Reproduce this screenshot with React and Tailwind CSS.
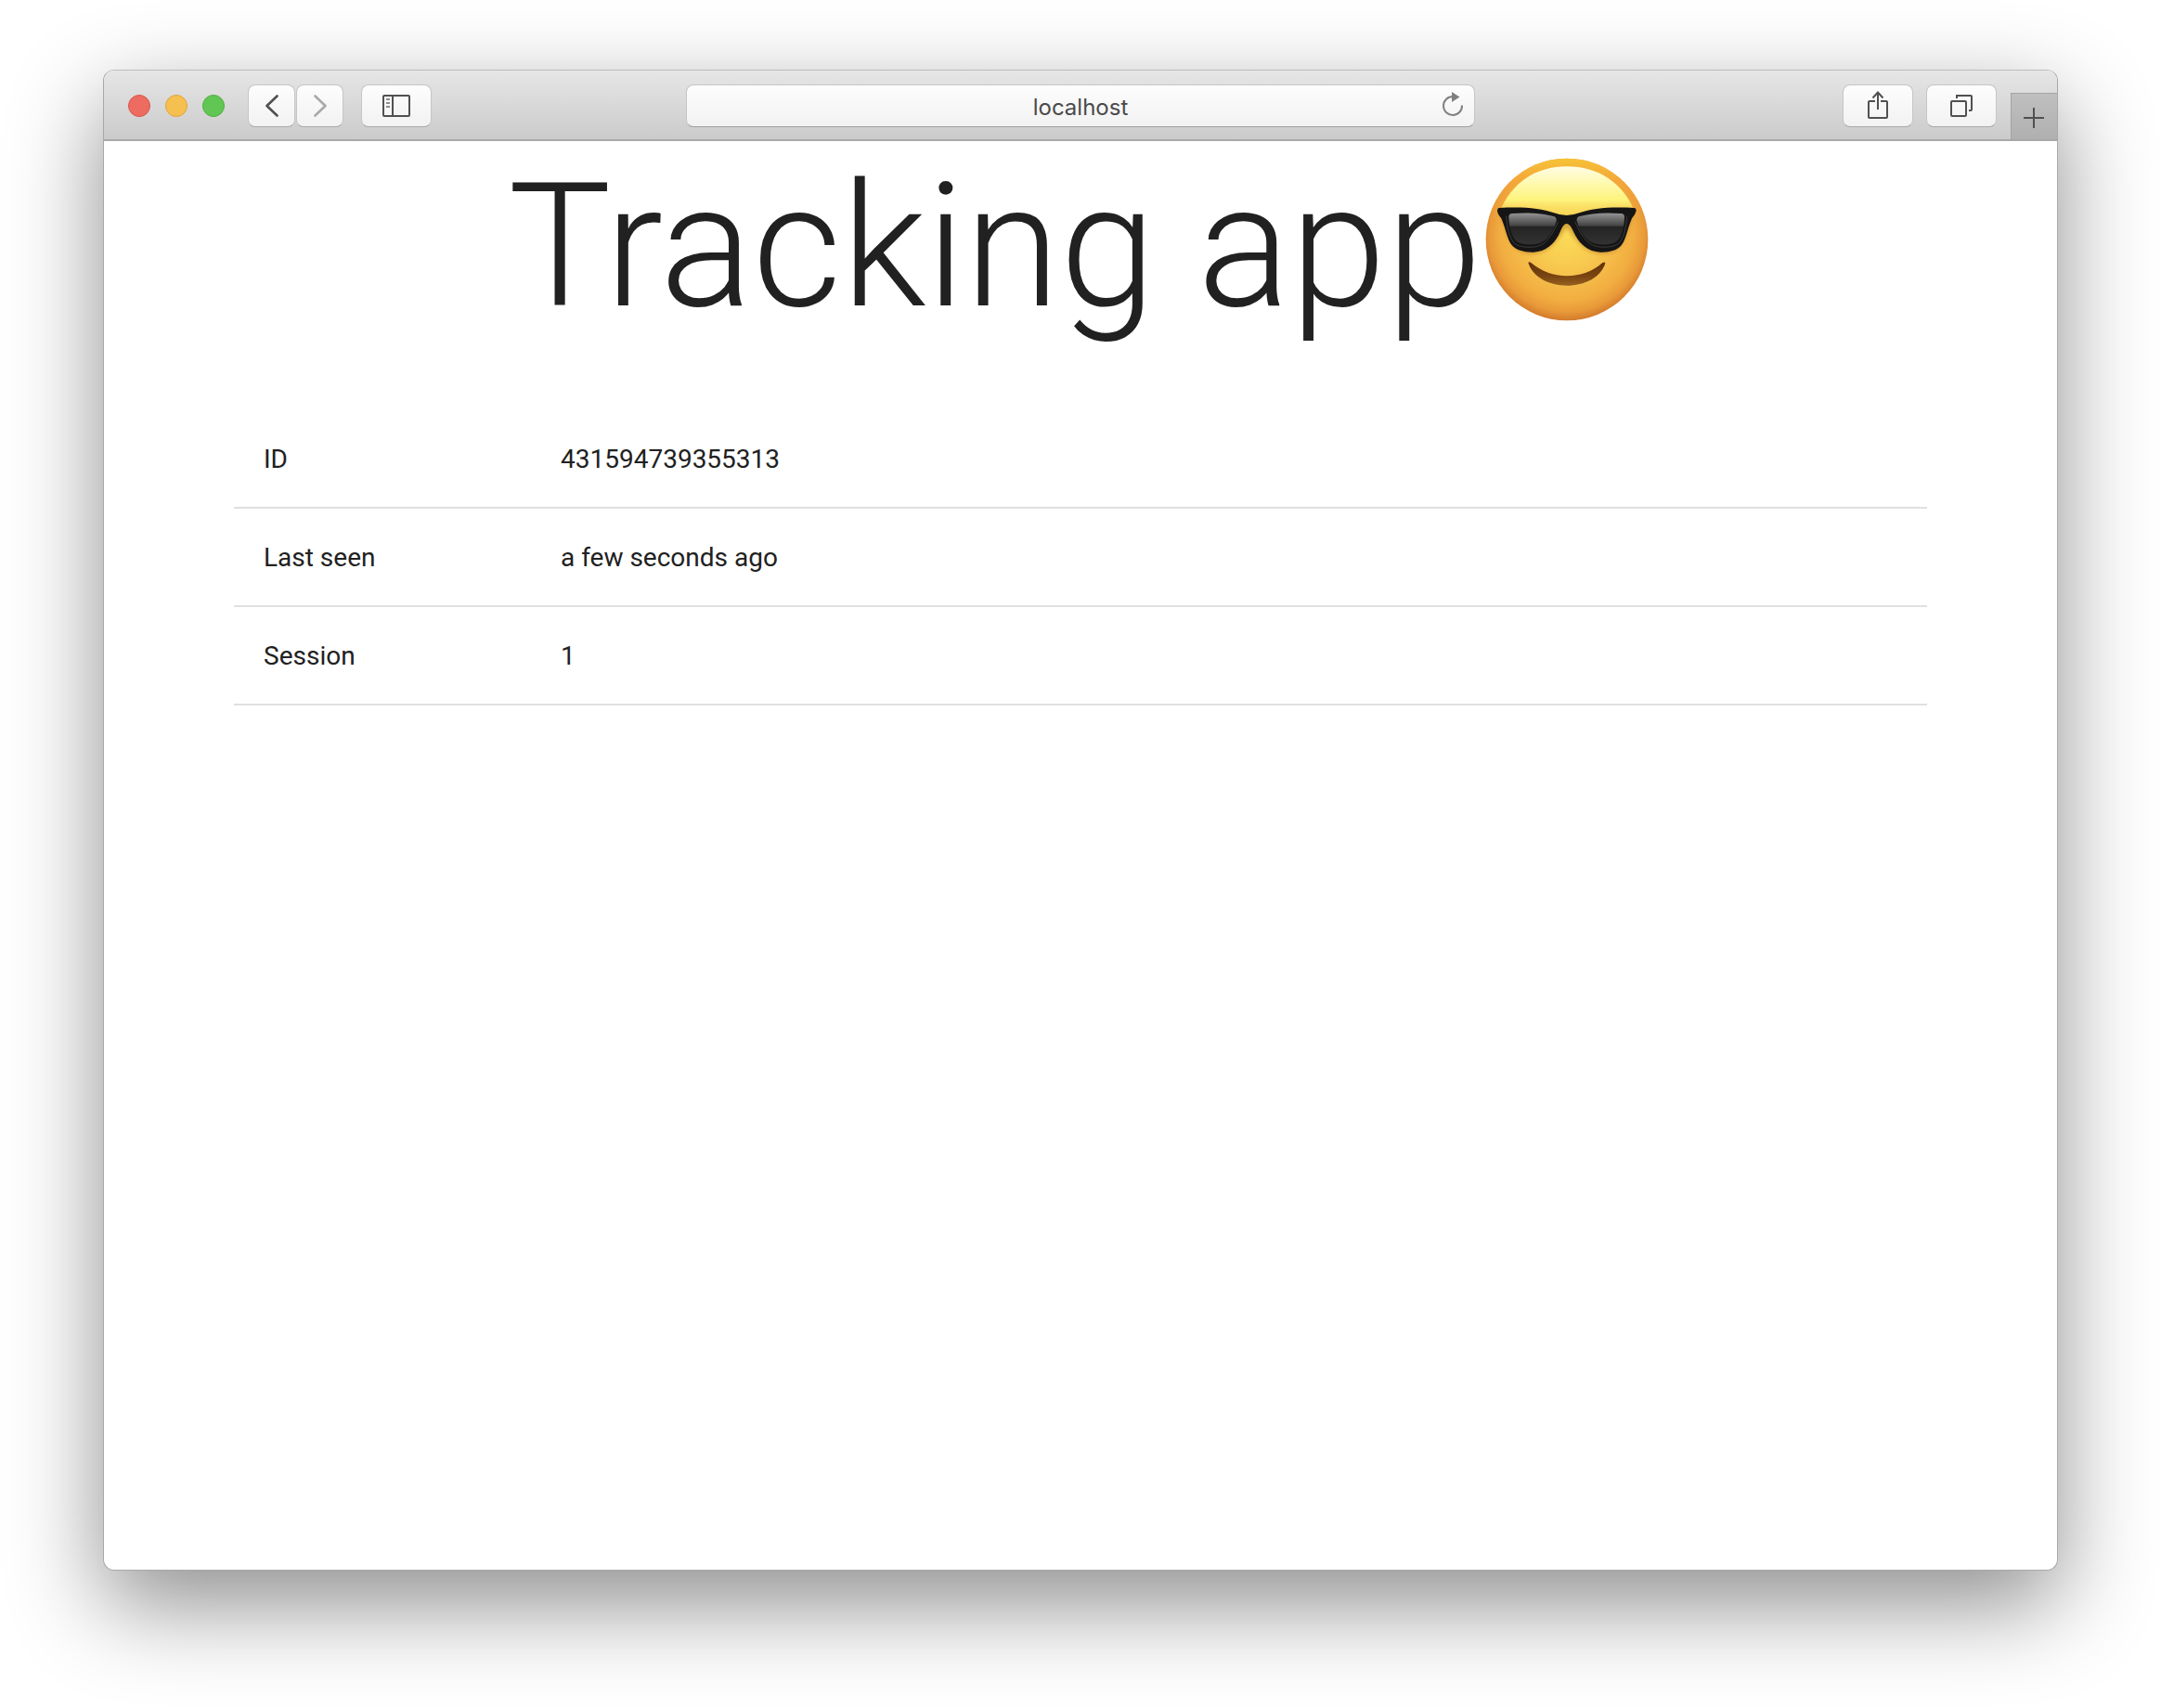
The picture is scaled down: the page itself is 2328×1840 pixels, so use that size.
const rows = [
  { label: "ID", value: "431594739355313" },
  { label: "Last seen", value: "a few seconds ago" },
  { label: "Session", value: "1" },
];

const lights = [
  { name: "Close", style: "border-[#d9574c] bg-[#ed6b60]" },
  { name: "Minimize", style: "border-[#e0a33e] bg-[#f5c04f]" },
  { name: "Zoom", style: "border-[#51ad42] bg-[#62c655]" },
];

function ToolButton({ label, wide, children }) {
  return (
    <button
      type="button"
      aria-label={label}
      className={
        (wide ? "w-[76px]" : "w-[51px]") +
        " flex h-[46px] items-center justify-center rounded-lg border border-[#c6c6c6] border-b-[#a9a9a9] bg-linear-to-b from-[#fdfdfd] to-[#f2f2f2] text-[#505050]"
      }
    >
      {children}
    </button>
  );
}

function Chevron({ flip }) {
  return (
    <svg
      width="14"
      height="24"
      viewBox="0 0 14 24"
      fill="none"
      stroke={flip ? "#a9a9a9" : "#505050"}
      strokeWidth="2.6"
      strokeLinecap="round"
      strokeLinejoin="round"
    >
      <path d={flip ? "M1.5 1.5 12.5 12 1.5 22.5" : "M12.5 1.5 1.5 12 12.5 22.5"} />
    </svg>
  );
}

function SidebarIcon() {
  return (
    <svg width="30" height="24" viewBox="0 0 30 24" fill="none" stroke="currentColor" strokeWidth="2">
      <rect x="1" y="1" width="28" height="22" rx="1" />
      <path d="M11 1v22" />
      <path d="M4 5h4M4 9h4M4 13h4" stroke="#8c8c8c" />
    </svg>
  );
}

function ShareIcon() {
  return (
    <svg width="22" height="32" viewBox="0 0 22 32" fill="none" stroke="currentColor" strokeWidth="2">
      <path d="M8 11H2Q1 11 1 12V28Q1 29 2 29H20Q21 29 21 28V12Q21 11 20 11H14" />
      <path d="M11 20V1.5M5.5 7.5 11 1.5l5.500 6" />
    </svg>
  );
}

function TabsIcon() {
  return (
    <svg width="24" height="24" viewBox="0 0 24 24" fill="none" stroke="currentColor" strokeWidth="2">
      <rect x="1" y="7" width="16" height="16" rx="1" />
      <path d="M7 4V1H22Q23 1 23 2V16Q23 17 22 17H20" />
    </svg>
  );
}

function ReloadIcon() {
  return (
    <svg width="24" height="28" viewBox="0 0 24 28" fill="none" stroke="#808080" strokeWidth="2">
      <path d="M22 15.500A10 10 0 1 1 12 6H13" />
      <path d="M11 1 19.500 6.500 11 12z" fill="#808080" stroke="none" />
    </svg>
  );
}

function CoolFace() {
  return (
    <svg
      role="img"
      aria-label="smiling face with sunglasses"
      viewBox="90 44 528 528"
      className="mt-[18px] mr-1 ml-1 size-[176px] shrink-0"
    >
      <defs>
        <radialGradient id="skin" cx="354" cy="290" r="285" gradientUnits="userSpaceOnUse">
          <stop offset="0" stopColor="#fbdc58" />
          <stop offset="0.35" stopColor="#f8cb50" />
          <stop offset="0.75" stopColor="#f2ae41" />
          <stop offset="0.88" stopColor="#e99a39" />
          <stop offset="1" stopColor="#cf7529" />
        </radialGradient>
        <linearGradient id="rim" x1="0" y1="46" x2="0" y2="230" gradientUnits="userSpaceOnUse">
          <stop offset="0" stopColor="#f6c437" />
          <stop offset="0.4" stopColor="#f6a838" stopOpacity="0.8" />
          <stop offset="1" stopColor="#f0a23a" stopOpacity="0" />
        </linearGradient>
        <linearGradient id="shine" x1="0" y1="70" x2="0" y2="240" gradientUnits="userSpaceOnUse">
          <stop offset="0" stopColor="#fffde6" />
          <stop offset="0.3" stopColor="#fffab4" />
          <stop offset="0.65" stopColor="#fdf37c" />
          <stop offset="1" stopColor="#fbe25c" stopOpacity="0.2" />
        </linearGradient>
        <linearGradient id="lens" x1="0" y1="222" x2="0" y2="330" gradientUnits="userSpaceOnUse">
          <stop offset="0" stopColor="#959595" />
          <stop offset="0.38" stopColor="#444444" />
          <stop offset="0.42" stopColor="#242424" />
          <stop offset="1" stopColor="#343434" />
        </linearGradient>
        <linearGradient id="mouth" x1="0" y1="380" x2="0" y2="458" gradientUnits="userSpaceOnUse">
          <stop offset="0" stopColor="#5f3208" />
          <stop offset="0.6" stopColor="#7b4512" />
          <stop offset="1" stopColor="#97621f" />
        </linearGradient>
        <filter id="soft" x="-20%" y="-20%" width="140%" height="140%">
          <feGaussianBlur stdDeviation="6" />
        </filter>
      </defs>
      <circle cx="354" cy="308" r="262" fill="url(#skin)" />
      <circle cx="354" cy="308" r="262" fill="url(#rim)" />
      <path d="M138 215C176 124 254 72 354 72S534 124 572 215L560 240H150Z" fill="url(#shine)" />
      <path
        d="M140 222Q240 208 353 240Q466 208 568 222C552 262 548 354 470 354C410 354 384 310 353 268C322 310 298 354 240 354C160 354 156 262 140 222Z"
        fill="#a8641a"
        opacity="0.45"
        filter="url(#soft)"
      />
      <path
        d="M134 206C210 202 268 206 312 222Q353 238 394 222C438 206 496 202 572 206Q580 208 577 218Q575 228 564 240C550 272 546 304 532 324C518 344 490 350 462 349C420 347 396 322 380 292C370 272 364 257 353 257C342 257 338 272 328 292C312 322 288 347 246 349C218 350 190 344 174 324C160 304 156 272 142 240Q130 226 129 216Q129 207 134 206Z"
        fill="#151515"
      />
      <path
        d="M158 232C160 270 168 300 182 318C196 332 222 334 246 332C282 330 304 300 326 250M548 232C546 270 538 300 524 318C510 332 484 334 462 332C424 330 402 300 380 250"
        fill="none"
        stroke="#3c3c3c"
        strokeWidth="3"
      />
      <path
        d="M176 224C224 220 276 222 314 234Q322 238 320 248C308 292 284 322 244 324C212 325 192 322 180 300C170 280 166 254 166 234Q167 225 176 224Z"
        fill="url(#lens)"
      />
      <path
        d="M530 224C482 220 432 222 392 234Q384 238 386 248C398 292 422 322 462 324C494 325 514 322 526 300C536 280 540 254 540 234Q539 225 530 224Z"
        fill="url(#lens)"
      />
      <path
        d="M229 384Q231 378 239 384C272 412 312 426 354 426S438 412 468 384Q476 378 478 385C464 430 412 457 354 457S244 430 229 384Z"
        fill="url(#mouth)"
        stroke="#f9c753"
        strokeWidth="3"
        paintOrder="stroke"
      />
    </svg>
  );
}

export default function App() {
  return (
    <div className="flex min-h-screen flex-col bg-white px-[111px] pt-[75px] pb-[148px] font-[Roboto,sans-serif] text-[#212121]">
      <div className="flex flex-1 flex-col overflow-hidden rounded-xl border border-[#a8a8a8] border-t-[#bdbdbd] bg-white shadow-[0_36px_100px_rgba(0,0,0,0.45)]">
        <header className="flex h-[76px] items-center border-b-2 border-[#a9a9a9] bg-linear-to-b from-[#e6e6e6] to-[#cbcbcb] pt-0.5">
          <div className="flex flex-1 items-center">
            <div className="ml-[26px] flex gap-4">
              {lights.map((light) => (
                <button
                  key={light.name}
                  type="button"
                  aria-label={light.name}
                  className={"size-6 rounded-full border " + light.style}
                />
              ))}
            </div>
            <div className="ml-[25px] flex gap-px">
              <ToolButton label="Back">
                <Chevron />
              </ToolButton>
              <ToolButton label="Forward">
                <Chevron flip />
              </ToolButton>
            </div>
            <div className="ml-[19px]">
              <ToolButton label="Show sidebar" wide>
                <SidebarIcon />
              </ToolButton>
            </div>
          </div>
          <div className="relative w-[850px]">
            <input
              type="text"
              aria-label="Address"
              defaultValue="localhost"
              className="block h-[46px] w-full rounded-lg border border-[#c6c6c6] border-b-[#9f9f9f] bg-linear-to-b from-[#fdfdfd] to-[#f2f2f2] pt-0.5 text-center font-[Inter,sans-serif] text-2xl text-[#4a4a4a] outline-none"
            />
            <button type="button" aria-label="Reload" className="absolute top-[7px] right-3">
              <ReloadIcon />
            </button>
          </div>
          <div className="flex flex-1 items-center justify-end self-stretch">
            <div className="flex gap-[14px]">
              <ToolButton label="Share" wide>
                <ShareIcon />
              </ToolButton>
              <ToolButton label="Show tabs" wide>
                <TabsIcon />
              </ToolButton>
            </div>
            <button
              type="button"
              aria-label="New tab"
              className="ml-[15px] flex h-[50px] w-[50px] items-center justify-center self-end border-t border-l border-[#a3a3a3] bg-linear-to-b from-[#bfbfbf] to-[#b0b0b0] pt-0.5 pr-0.5"
            >
              <svg width="22" height="22" viewBox="0 0 22 22" stroke="#505050" strokeWidth="2">
                <path d="M11 0v22M0 11h22" />
              </svg>
            </button>
          </div>
        </header>
        <main className="flex-1 px-[140px]">
          <h1 className="mb-[66px] flex h-[224px] items-start justify-center text-[186px] leading-[226px] font-light">
            <span>Tracking app</span>
            <CoolFace />
          </h1>
          <table className="w-full table-fixed border-separate border-spacing-0 text-left text-[28px] leading-[40px]">
            <tbody>
              {rows.map((row) => (
                <tr key={row.label}>
                  <th
                    scope="row"
                    className="w-[320px] border-b-2 border-[#e0e0e0] px-8 pt-[33px] pb-[31px] font-normal"
                  >
                    {row.label}
                  </th>
                  <td className="border-b-2 border-[#e0e0e0] px-8 pt-[33px] pb-[31px]">{row.value}</td>
                </tr>
              ))}
            </tbody>
          </table>
        </main>
      </div>
    </div>
  );
}
